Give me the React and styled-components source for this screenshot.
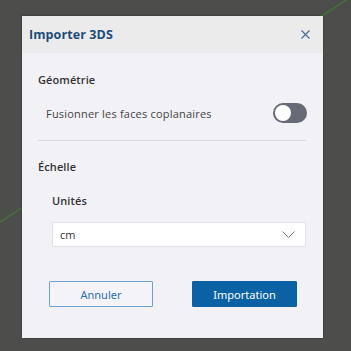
import React, { useState } from 'react';
import styled, { createGlobalStyle } from 'styled-components';

const Global = createGlobalStyle`
  html, body { margin: 0; padding: 0; }
  body {
    background: #4d4d4b;
    font-family: "Open Sans", "Liberation Sans", sans-serif;
    width: 351px;
    height: 351px;
    overflow: hidden;
  }
`;

const Scene = styled.div`
  position: relative;
  width: 351px;
  height: 351px;
  padding: 16px 0 0 22px;
  box-sizing: border-box;
`;

const Axis = styled.svg`
  position: absolute;
  left: 0;
  top: 0;
`;

const Dialog = styled.div`
  position: relative;
  width: 301px;
  height: 322px;
  background: #f2f1f6;
  box-shadow: 0 0 2px rgba(0, 0, 0, 0.4);
  display: flex;
  flex-direction: column;
`;

const Header = styled.div`
  height: 37px;
  background: #ebebeb;
  display: flex;
  align-items: center;
  justify-content: space-between;
  padding: 0 12px 0 7px;
`;

const Title = styled.h1`
  margin: 0;
  font-size: 12.5px;
  font-weight: 700;
  color: #1d4b7a;
  letter-spacing: 0.1px;
`;

const Close = styled.button`
  border: none;
  background: none;
  padding: 0;
  width: 12px;
  height: 12px;
  display: flex;
  align-items: center;
  justify-content: center;
`;

const Body = styled.div`
  flex: 1;
  display: flex;
  flex-direction: column;
  padding: 19px 17px 0 16px;
`;

const Section = styled.div`
  font-size: 11px;
  line-height: 16px;
  font-weight: 600;
  color: #333;
  letter-spacing: 0.1px;
  margin-top: ${p => p.$top || 0}px;
`;

const Row = styled.div`
  display: flex;
  align-items: center;
  justify-content: space-between;
  margin-top: 15px;
  padding-left: 8px;
`;

const Label = styled.span`
  font-size: 11px;
  letter-spacing: 0.2px;
  color: #444;
`;

const Toggle = styled.button`
  width: 34px;
  height: 20px;
  border-radius: 10px;
  border: none;
  padding: 2px;
  background: ${p => (p.$on ? '#0a62a5' : '#676a77')};
  display: flex;
  justify-content: ${p => (p.$on ? 'flex-end' : 'flex-start')};
  margin-right: -1px;
`;

const Knob = styled.span`
  width: 16px;
  height: 16px;
  border-radius: 50%;
  background: #fff;
`;

const Divider = styled.hr`
  border: none;
  height: 1px;
  background: #d9d8de;
  margin: 17px 0 0;
`;

const Field = styled.div`
  padding-left: 14px;
  display: flex;
  flex-direction: column;
`;

const Select = styled.div`
  margin-top: 13px;
  height: 25px;
  box-sizing: border-box;
  background: #fff;
  border: 1px solid #e2e1e8;
  display: flex;
  align-items: center;
  justify-content: space-between;
  padding: 0 10px 0 7px;
  font-size: 11px;
  color: #333;
`;

const Actions = styled.div`
  display: flex;
  justify-content: center;
  gap: 39px;
  margin: 34px 0 0 2px;
`;

const Button = styled.button`
  width: ${p => (p.$primary ? 105 : 104)}px;
  height: 26px;
  font-family: "Noto Sans", "Open Sans", sans-serif;
  font-size: 11px;
  border-radius: 1px;
  border: ${p => (p.$primary ? '1px solid #0a62a5' : '1.5px solid #6ea2d2')};
  background: ${p => (p.$primary ? '#0a62a5' : '#f4f4f8')};
  color: ${p => (p.$primary ? '#fff' : '#2c6fb0')};
`;

export default function App() {
  const [merge, setMerge] = useState(false);
  return (
    <>
      <Global />
      <Scene>
        <Axis width="351" height="351">
          <line x1="0" y1="222" x2="351" y2="-3" stroke="#3f7a33" strokeWidth="1.2" />
        </Axis>
        <Dialog>
          <Header>
            <Title>Importer 3DS</Title>
            <Close aria-label="Fermer">
              <svg width="9" height="9" viewBox="0 0 9 9">
                <path d="M0.5 0.5L8.5 8.5M8.5 0.5L0.5 8.5" stroke="#4a6a93" strokeWidth="1.1" />
              </svg>
            </Close>
          </Header>
          <Body>
            <Section>Géométrie</Section>
            <Row>
              <Label>Fusionner les faces coplanaires</Label>
              <Toggle $on={merge} onClick={() => setMerge(!merge)}>
                <Knob />
              </Toggle>
            </Row>
            <Divider />
            <Section $top={18}>Échelle</Section>
            <Field>
              <Section $top={18}>Unités</Section>
              <Select>
                <span>cm</span>
                <svg width="13" height="7" viewBox="0 0 13 7">
                  <path d="M0.5 0.5L6.5 6.5L12.5 0.5" fill="none" stroke="#777" strokeWidth="1" />
                </svg>
              </Select>
            </Field>
            <Actions>
              <Button>Annuler</Button>
              <Button $primary>Importation</Button>
            </Actions>
          </Body>
        </Dialog>
      </Scene>
    </>
  );
}
